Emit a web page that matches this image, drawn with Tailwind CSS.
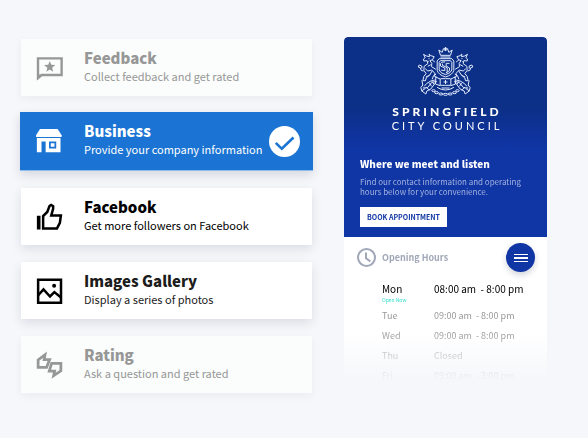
<!DOCTYPE html>
<html lang="en">
<head>
<meta charset="utf-8">
<meta name="viewport" content="width=device-width, initial-scale=1">
<title>Springfield City Council</title>
<script src="https://cdn.jsdelivr.net/npm/@tailwindcss/browser@4"></script>
</head>
<body class="min-h-screen bg-[#f6f7fa] font-['Noto_Sans_CJK_SC','Noto_Sans',sans-serif] text-black">
<main class="flex items-start justify-between gap-6 pt-[37px] pr-[41px] pl-[21px]">

  <section aria-label="Content types" class="flex max-w-[291px] flex-1 flex-col gap-[17px] pt-[2px]">
    <button type="button" class="flex h-[57px] items-center gap-[19px] bg-[#fbfdfc] px-[14px] text-left text-[#969796] shadow-[0_3px_8px_rgba(30,40,80,0.05)]">
      <svg class="size-[30px] shrink-0" viewBox="0 0 24 24" aria-hidden="true"><path d="M2.4 20V4.3h18.9v13.3H5.2z" fill="none" stroke="currentColor" stroke-width="1.9"/><path d="M1.6 16v5.8l4-3.4z" fill="currentColor"/><path d="m11.8 6.3 1.2 3.1 3.2.2-2.5 2.1.8 3.3-2.7-1.8L9 15l.9-3.3-2.6-2.1 3.3-.2z" fill="currentColor"/></svg>
      <span class="flex flex-col pb-[3px]"><strong class="text-[15px] leading-[19px] font-black">Feedback</strong><span class="text-[11px] leading-[18px] font-normal">Collect feedback and get rated</span></span>
    </button>

    <button type="button" aria-pressed="true" class="-mx-px -mt-px flex h-[59px] items-center gap-[19px] border-b border-[#8fbcea] bg-[#1b74d3] pr-[13px] pl-[15px] text-left text-white shadow-[0_4px_10px_rgba(30,40,80,0.15)]">
      <svg class="size-[30px] shrink-0" viewBox="0 0 24 24" fill="currentColor" aria-hidden="true"><path d="M4 2.3h14.1l3.2 5v1.4H.8V7.3z"/><path fill-rule="evenodd" d="M1.5 9.5h18.9V21H8.5v-8.7H5.2V21H1.5zm9.7 2.8V18H17v-5.7z"/><path d="M12.6 13.8h3v2.8h-3z"/></svg>
      <span class="flex flex-1 flex-col pb-[3px]"><strong class="text-[15px] leading-[19px] font-black">Business</strong><span class="text-[11px] leading-[18px] font-normal whitespace-nowrap">Provide your company information</span></span>
      <svg class="-ml-[19px] size-[31px] shrink-0" viewBox="0 0 31 31" aria-hidden="true"><circle cx="15.5" cy="15.5" r="15.5" fill="white"/><path d="m6.8 16.8 6 6L24.5 11.5" fill="none" stroke="#1b74d3" stroke-width="2.6"/></svg>
    </button>

    <button type="button" class="flex h-[57px] items-center gap-[19px] bg-white px-[14px] text-left shadow-[0_4px_10px_rgba(30,40,80,0.12)]">
      <svg class="size-[30px] shrink-0" viewBox="0 0 24 24" aria-hidden="true"><path d="M1.5 11h2.9v11H1.5z" fill="currentColor"/><path d="M6.5 21.2v-9.9L9.8 8l1.8-4.8 1.3-.8 1.6.9v2.2L13 10.8h7.7l-.8 5.8-2.4 4.6z" fill="none" stroke="currentColor" stroke-width="2"/></svg>
      <span class="flex flex-col pb-[3px]"><strong class="text-[15px] leading-[19px] font-black">Facebook</strong><span class="text-[11px] leading-[18px] font-normal">Get more followers on Facebook</span></span>
    </button>

    <button type="button" class="flex h-[57px] items-center gap-[19px] bg-white px-[14px] text-left text-[#1c1c1c] shadow-[0_4px_10px_rgba(30,40,80,0.12)]">
      <svg class="size-[30px] shrink-0 text-black" viewBox="0 0 24 24" fill="none" stroke="currentColor" stroke-width="2" aria-hidden="true"><path d="M2.5 2.9h18.3v18.5H2.5z"/><path d="m2.4 15.6 4.4-4.9 5.2 5.7 3.5-3.5 5.3 4.3"/><circle cx="15.3" cy="7.8" r="1.6" fill="currentColor" stroke="none"/></svg>
      <span class="flex flex-col pb-[3px]"><strong class="text-[15px] leading-[19px] font-black">Images Gallery</strong><span class="text-[11px] leading-[18px] font-normal">Display a series of photos</span></span>
    </button>

    <button type="button" class="flex h-[57px] items-center gap-[19px] bg-[#fbfdfc] px-[14px] text-left text-[#969796] shadow-[0_3px_8px_rgba(30,40,80,0.05)]">
      <svg class="size-[30px] shrink-0" viewBox="0 0 24 24" fill="none" stroke="currentColor" stroke-width="2.2" aria-hidden="true"><path d="M2.5 13.8V7.9L8 3.8l-.7 3.8h4.4l-2.4 6.2z"/><path d="m11.4 16.9 1.9-6.3h7.4v6.1l-5.8 3.9.8-3.7z"/></svg>
      <span class="flex flex-col pb-[3px]"><strong class="text-[15px] leading-[19px] font-black">Rating</strong><span class="text-[11px] leading-[18px] font-normal">Ask a question and get rated</span></span>
    </button>
  </section>

  <article class="w-[203px] shrink-0 overflow-hidden rounded-t-[4px] bg-white mask-[linear-gradient(to_bottom,black_84%,transparent_99%)] shadow-[0_2px_10px_rgba(30,40,80,0.1)]">
    <header class="flex h-[200px] flex-col bg-linear-to-b from-[#0c2f87] via-[#0c2f87] via-35% to-[#1035a4] to-55% pt-[9px] text-white">
      <svg class="h-[50px] w-[57px] self-center" viewBox="250 46 170 150" fill="none" stroke="#e3ebff" stroke-width="3" role="img" aria-label="Springfield coat of arms">
        <path d="m320 74-5-16 10 7 4-11 6 7 6-7 4 11 10-7-5 16zM335 60V49m-5 4h10M320 79h30"/>
        <path d="M316 84h38l6 7v28q-3 13-25 20-22-7-25-20V91zM320 90h30l4 5v23q-2 9-19 14-17-5-19-14V95z"/>
        <path d="M347 98h-10v8l10 6v8l-11 7M334 94h-9l-5 5v7l13 6v8l-12-2M326 99v5l14 7v14"/>
        <g id="supporter">
          <path d="m301 78-10-3-5-5 1 8-9-2-9-5 5 10-5 4 1 6 10-1 2 9-11 8-1 12 7 10-7 8-3 13h8l2-8 10-9M301 78l-5 9-8 3 6 8-1 10 13 8M284 92l-4 5m4-13h3m-13 30 8 7 12-3 9 10-1 9 7 3M295 121l-8 13-11 5m27-45-8-6m12 42-8 5-4 11M291 102l-9 5m-13 14-7-2-3-8-6-2 3-6 8 3v8"/>
          <path d="m264 149 3 14-6 8 3 10 12 9 3-9 12-6 17-23-14 3-13 16-14 1m4-5 8-9 12-7 12-3m-28 25-12 8m14-12 10 10m0-22 6 10m1-15 7 9"/>
          <path d="m306 139 13 6v20l-14-5zM320 144h15m-15 20h15m-25 6q12 8 25 8"/>
          <ellipse cx="299" cy="180" rx="5" ry="3"/><ellipse cx="308" cy="186" rx="6" ry="3"/><ellipse cx="321" cy="190" rx="6" ry="3"/>
        </g>
        <use href="#supporter" transform="translate(670 0) scale(-1 1)"/>
        <path d="M335 148v12m-6-6h12m-18 18h24"/><ellipse cx="335" cy="191" rx="7" ry="3"/>
      </svg>
      <div class="mt-[9px] flex flex-col items-center pl-[3px] font-[Lato,sans-serif] leading-[14px]">
        <span class="text-[12px] font-black tracking-[3px]">SPRINGFIELD</span>
        <span class="text-[11px] tracking-[3px]">CITY COUNCIL</span>
      </div>
      <div class="mt-[21px] pl-4">
        <h2 class="text-[10px] leading-[20px] font-black">Where we meet and listen</h2>
        <p class="mt-[3px] text-[8px] leading-[10px] text-[#a3b3e0]">Find our contact information and operating<br>hours below for your convenience.</p>
        <button type="button" class="mt-[10px] h-[20px] bg-white px-[7px] text-[7px] leading-[20px] font-bold text-[#1035a4]">BOOK APPOINTMENT</button>
      </div>
    </header>

    <div class="flex h-[41px] items-center pr-3 pl-[13px]">
      <svg class="size-[19px] shrink-0" viewBox="0 0 19 19" fill="none" stroke="#a0a7b7" stroke-width="2" aria-hidden="true"><circle cx="9.5" cy="9.5" r="8.5"/><path d="M9 4.5v5.7l4.4 3.2"/></svg>
      <h3 class="ml-[6px] flex-1 text-[9px] font-bold text-[#a0a7b7]">Opening Hours</h3>
      <button type="button" aria-label="Menu" class="flex size-[29px] flex-col items-center justify-center gap-[2px] rounded-full bg-[#1035a4] shadow-[0_3px_6px_rgba(30,40,80,0.2)]">
        <span class="h-px w-[14px] bg-white"></span><span class="h-[2px] w-[14px] bg-white"></span><span class="h-px w-[14px] bg-white"></span>
      </button>
    </div>

    <table class="mt-[4px] ml-[38px] text-left text-[9px] text-[#999]">
      <tbody>
        <tr class="h-6 align-top text-[10px] text-black"><th scope="row" class="w-[52px] font-normal leading-[14px]">Mon<span class="block text-[5px] leading-[7px] text-[#2fdccb]">Open Now</span></th><td class="whitespace-pre leading-[14px]">08:00 am  - 8:00 pm</td></tr>
        <tr class="h-5"><th scope="row" class="font-normal">Tue</th><td class="whitespace-pre">09:00 am  - 8:00 pm</td></tr>
        <tr class="h-5"><th scope="row" class="font-normal">Wed</th><td class="whitespace-pre">09:00 am  - 8:00 pm</td></tr>
        <tr class="h-5 text-[#aaa]"><th scope="row" class="font-normal">Thu</th><td>Closed</td></tr>
        <tr class="h-5 text-[#aaa]"><th scope="row" class="font-normal">Fri</th><td class="whitespace-pre">09:00 am  - 3:00 pm</td></tr>
      </tbody>
    </table>
  </article>
</main>
</body>
</html>
